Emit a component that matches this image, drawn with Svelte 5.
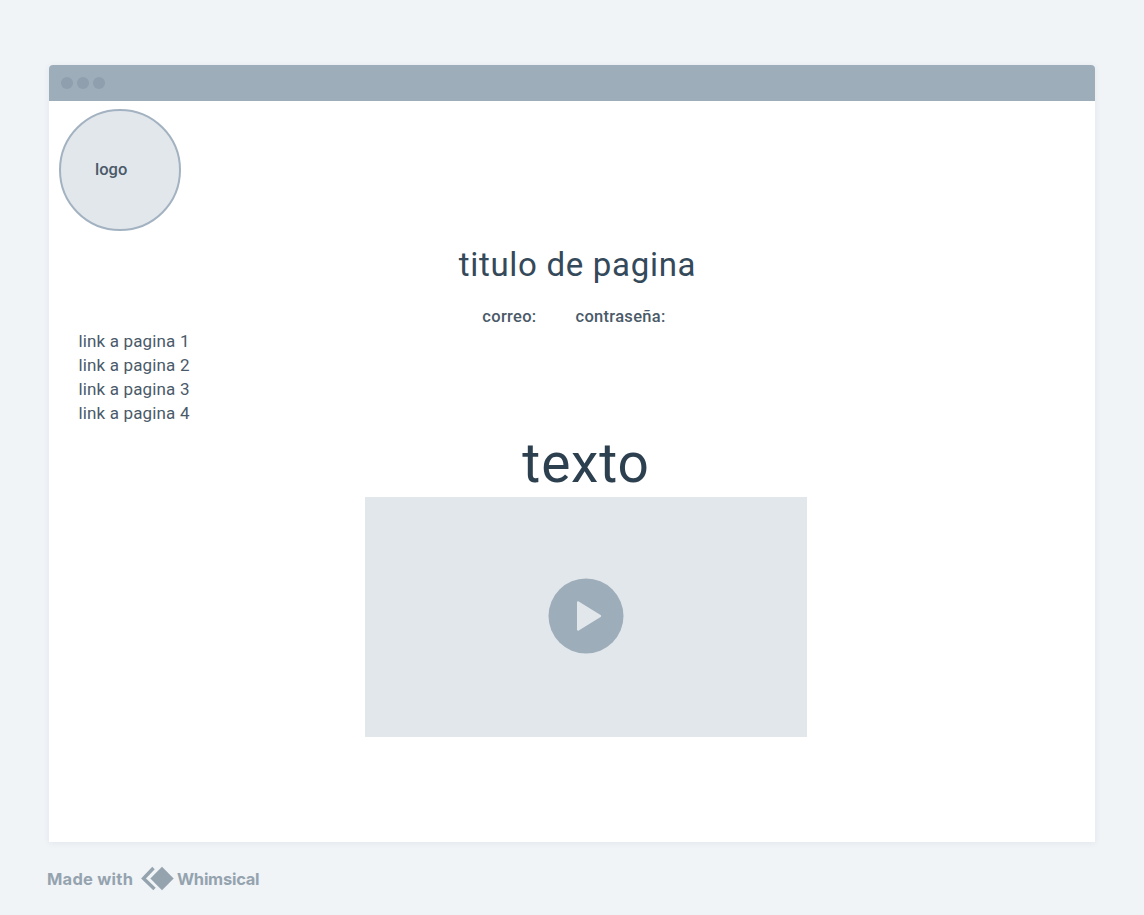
<script>
	const links = ['link a pagina 1', 'link a pagina 2', 'link a pagina 3', 'link a pagina 4'];
</script>

<div class="page">
	<div class="window">
		<div class="titlebar">
			<span class="dot"></span>
			<span class="dot"></span>
			<span class="dot"></span>
		</div>
		<div class="content">
			<div class="logo"><span>logo</span></div>
			<h1 class="title">titulo de pagina</h1>
			<div class="fields">
				<span>correo:</span>
				<span>contraseña:</span>
			</div>
			<ul class="links">
				{#each links as link}
					<li>{link}</li>
				{/each}
			</ul>
			<div class="texto">texto</div>
			<div class="video">
				<svg width="76" height="76" viewBox="0 0 76 76" aria-hidden="true">
					<circle cx="38" cy="38" r="37.5" fill="#9eadba" />
					<path d="M29 24.5v27c0 1 .9 1.5 1.7 1L52.6 39c.8-.5.8-1.5 0-2L30.7 23.5c-.8-.5-1.7 0-1.7 1z" fill="#e2e7ec" />
				</svg>
			</div>
		</div>
	</div>
	<div class="made">
		<span class="made-with">Made with</span>
		<svg width="33" height="25" viewBox="0 0 33 25" aria-hidden="true">
			<path d="M12.5 2 2.5 12.5 13.5 23" fill="none" stroke="#95a3af" stroke-width="3.4" />
			<path d="M21 .8 32.7 12.5 21 24.2 9.3 12.5z" fill="#95a3af" />
		</svg>
		<span class="made-brand">Whimsical</span>
	</div>
</div>

<style>
	:global(body) {
		margin: 0;
		background: #f0f4f7;
	}

	.page {
		height: 915px;
		padding: 65px 49px 0;
		box-sizing: border-box;
		font-family: Roboto, 'Liberation Sans', sans-serif;
		overflow: hidden;
	}

	.window {
		width: 1046px;
		height: 777px;
		background: #fff;
		border-radius: 4px 4px 0 0;
		box-shadow: 0 1px 6px rgba(60, 80, 100, 0.08);
	}

	.titlebar {
		display: flex;
		align-items: center;
		gap: 4px;
		height: 36px;
		padding-left: 12px;
		background: #9eadba;
		border-radius: 4px 4px 0 0;
	}

	.dot {
		width: 12px;
		height: 12px;
		border-radius: 50%;
		background: #8f9fad;
	}

	.content {
		padding-top: 8px;
	}

	.logo {
		display: flex;
		align-items: center;
		box-sizing: border-box;
		width: 122px;
		height: 122px;
		margin-left: 10px;
		padding: 0 0 2px 34px;
		background: #e2e7ec;
		border: 2px solid #a3b2c1;
		border-radius: 50%;
		color: #4a5a69;
		font-size: 16.5px;
		font-weight: 500;
	}

	.title {
		margin: 14px 0 0;
		padding-left: 11px;
		color: #34495a;
		font-size: 33px;
		font-weight: 400;
		line-height: 40px;
		letter-spacing: 0.7px;
		text-align: center;
	}

	.fields {
		display: flex;
		justify-content: center;
		gap: 39px;
		margin-top: 20px;
		padding-left: 4px;
		color: #4a5a69;
		font-size: 16.5px;
		font-weight: 500;
		line-height: 24px;
		letter-spacing: 0.3px;
	}

	.links {
		margin: 0;
		padding: 0 0 0 29.5px;
		list-style: none;
		color: #4a5a69;
		font-size: 17px;
		line-height: 24px;
		letter-spacing: 0.15px;
	}

	.texto {
		margin-top: 8px;
		padding-left: 28px;
		color: #2d4050;
		font-size: 55px;
		line-height: 60px;
		letter-spacing: 0.8px;
		text-align: center;
	}

	.video {
		display: flex;
		align-items: center;
		justify-content: center;
		width: 442px;
		height: 240px;
		margin: 4px 0 0 316px;
		padding: 0 1px 2px 0;
		box-sizing: border-box;
		background: #e2e7ec;
	}

	.made {
		display: flex;
		align-items: center;
		margin: 24px 0 0 -2px;
		color: #95a3af;
		font-family: Inter, 'Liberation Sans', sans-serif;
		font-size: 16.5px;
		font-weight: 700;
	}

	.made-with {
		width: 86px;
		margin-right: 8px;
		white-space: nowrap;
		letter-spacing: 0.25px;
	}

	.made-brand {
		margin-left: 3px;
		letter-spacing: -0.25px;
	}

	.made svg {
		flex: none;
	}
</style>
